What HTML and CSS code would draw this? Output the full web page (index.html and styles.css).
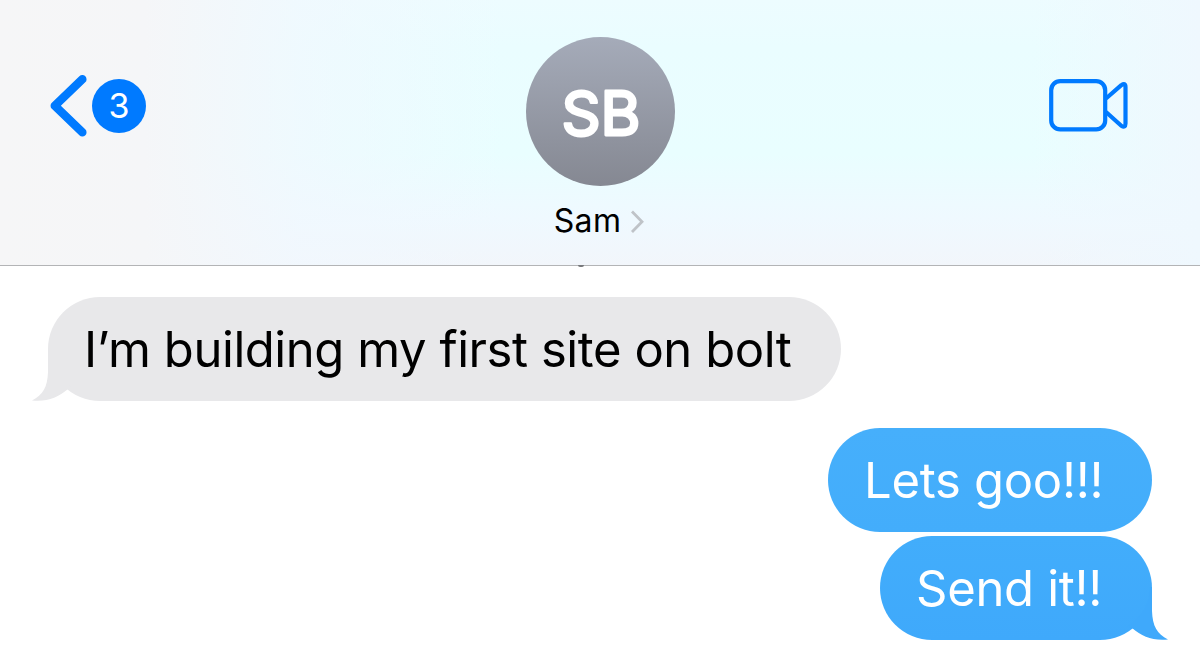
FILE: index.html
```
<!DOCTYPE html>
<html lang="en">

<head>
    <meta charset="UTF-8">
    <title>Sam</title>
    <link rel="stylesheet" href="styles.css">
</head>

<body>
    <header class="header">
        <div class="back">
            <svg class="back-arrow" width="38" height="64" viewBox="0 0 38 64">
                <path d="M32.3 5.3L4.8 31.8L32.3 58.3" />
            </svg>
            <span class="count">3</span>
        </div>
        <div class="contact">
            <div class="avatar">
                <svg width="149" height="149" viewBox="0 0 149 149">
                    <text class="initials" x="75" y="98" text-anchor="middle">SB</text>
                </svg>
            </div>
            <div class="name">
                <span>Sam</span>
                <svg class="name-arrow" width="14" height="26" viewBox="0 0 14 26">
                    <path d="M2 2.5L12 12.7L2 23" />
                </svg>
            </div>
        </div>
        <svg class="video" width="80" height="54" viewBox="0 0 80 54">
            <rect x="2.2" y="2.2" width="54" height="48.2" rx="9" />
            <path d="M57 19.5L72.3 6.2Q76.5 3.5 76.5 8V44.5Q76.5 49.3 72.3 46.7L57 33" />
        </svg>
        <i class="scrolled"></i>
    </header>

    <main class="messages">
        <div class="bubble received">
            <svg class="tail" width="50" height="54" viewBox="0 0 50 54">
                <path d="M15 0V24C14.5 39 10 47 -1 52.4C14 54 25 49.5 34.7 41.2L40 40Q17 25 17 0Z" />
            </svg>
            <span class="text">I’m building my first site on bolt</span>
        </div>
        <div class="bubble sent first">
            <span class="text">Lets goo!!!</span>
        </div>
        <div class="bubble sent last">
            <svg class="tail" width="50" height="54" viewBox="0 0 50 54">
                <path d="M35 0V24C35.5 39 40 47 51 52.4C36 54 25 49.5 15.3 41.2L10 40Q33 25 33 0Z" />
            </svg>
            <span class="text">Send it!!</span>
        </div>
    </main>
</body>

</html>
```

FILE: styles.css
```
* {
    box-sizing: border-box;
}

body {
    margin: 0;
    height: 656px;
    background: #fff;
    font-family: Inter, "Liberation Sans", sans-serif;
    overflow: hidden;
}

svg {
    display: block;
    overflow: visible;
}

.header {
    position: relative;
    display: grid;
    grid-template-columns: 1fr 149px 1fr;
    align-items: start;
    height: 266px;
    padding: 37px 71px 0 50px;
    border-bottom: 1px solid #b3b4b6;
    background:
        linear-gradient(to right, #f6f6f7 0, #f5f6f8 12%, rgba(241, 248, 254, 0.7) 25%, rgba(234, 254, 255, 0) 42%, rgba(234, 254, 255, 0) 86%, #eff8fe 100%),
        linear-gradient(to bottom, #edfcff 0, #eafdff 18%, #e9feff 58%, #eff9ff 82%, #f2f6fb 100%);
}

.back {
    display: flex;
    align-items: center;
    gap: 4px;
    height: 64px;
    margin-top: 37px;
}

.back-arrow {
    fill: none;
    stroke: #007aff;
    stroke-width: 8.5;
    stroke-linecap: round;
    stroke-linejoin: round;
}

.count {
    width: 54px;
    height: 54px;
    border-radius: 50%;
    background: #007aff;
    color: #fff;
    font-size: 34px;
    font-weight: 400;
    line-height: 54px;
    text-align: center;
}

.contact {
    display: flex;
    flex-direction: column;
    align-items: center;
    /* side paddings differ, so shift the column back to the middle */
    margin: 0 -10.5px 0 10.5px;
}

.avatar {
    width: 149px;
    height: 149px;
    border-radius: 50%;
    background: linear-gradient(#a5abb9, #858892);
}

.initials {
    fill: #fff;
    stroke: #fff;
    stroke-width: 2.8;
    stroke-linejoin: round;
    font-size: 61px;
    font-weight: 400;
}

.name {
    display: flex;
    align-items: center;
    gap: 9px;
    margin: 15px 2px 0 0;
    color: #000;
    font-size: 32px;
    letter-spacing: 0.4px;
    line-height: 40px;
}

.name-arrow {
    margin-top: 2px;
    fill: none;
    stroke: #bfc3c8;
    stroke-width: 2.8;
}

.video {
    justify-self: end;
    margin-top: 42px;
    fill: none;
    stroke: #007aff;
    stroke-width: 4.2;
    stroke-linejoin: round;
}

/* bottom of the message that went under the header */
.scrolled {
    position: absolute;
    left: 578px;
    top: 265px;
    width: 6px;
    height: 2px;
    border-radius: 0 0 3px 3px;
    background: #77787b;
}

.messages {
    display: flex;
    flex-direction: column;
    padding: 31px 48px 0;
}

.bubble {
    position: relative;
    height: 104px;
    padding-left: 36px;
    border-radius: 52px;
    font-size: 49px;
    line-height: 106px;
    white-space: nowrap;
}

.text {
    position: relative;
}

.tail {
    position: absolute;
    bottom: -1px;
}

.received {
    align-self: flex-start;
    width: 793px;
    background: #e8e8ea;
    color: #000;
    letter-spacing: -0.44px;
}

.received .tail {
    left: -15px;
    fill: #e8e8ea;
}

.sent {
    align-self: flex-end;
    color: #fff;
    letter-spacing: -0.3px;
}

.first {
    width: 324px;
    margin-top: 27px;
    background: linear-gradient(#46affb, #43adfb);
}

.last {
    width: 272px;
    margin-top: 4px;
    background: linear-gradient(#42adfb, #3fa9fb);
}

.last .tail {
    right: -15px;
    fill: #3fa9fb;
}
```
